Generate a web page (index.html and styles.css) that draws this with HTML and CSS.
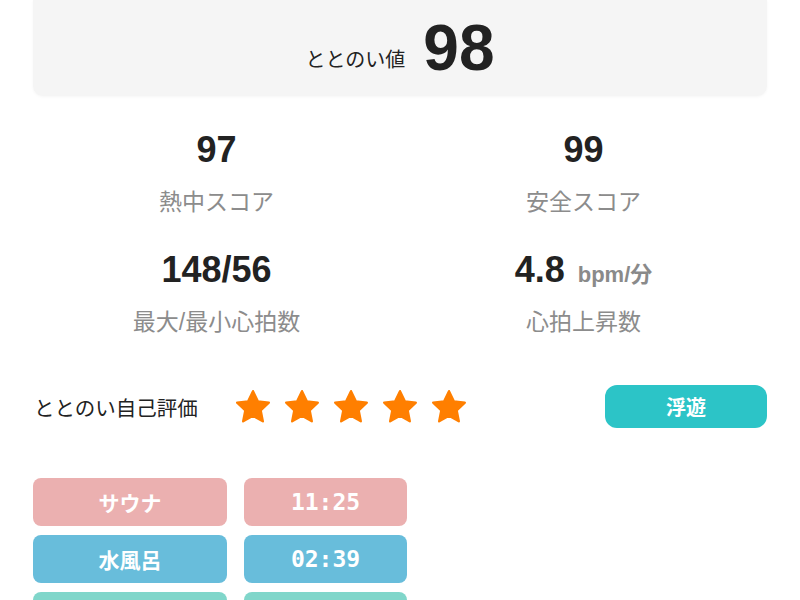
FILE: index.html
```html
<!DOCTYPE html>
<html lang="ja">
<head>
    <meta charset="UTF-8">
    <meta name="viewport" content="width=device-width, initial-scale=1.0">
    <title>ととのい記録</title>
    <link rel="stylesheet" href="styles.css">
</head>
<body>
    <div class="page">
        <div class="score-card">
            <span class="score-label">ととのい値</span>
            <span class="score-value">98</span>
        </div>

        <div class="stats">
            <div class="stat">
                <div class="stat-value">97</div>
                <div class="stat-label">熱中スコア</div>
            </div>
            <div class="stat">
                <div class="stat-value">99</div>
                <div class="stat-label">安全スコア</div>
            </div>
            <div class="stat">
                <div class="stat-value">148/56</div>
                <div class="stat-label">最大/最小心拍数</div>
            </div>
            <div class="stat">
                <div class="stat-value">4.8 <span class="unit">bpm/分</span></div>
                <div class="stat-label">心拍上昇数</div>
            </div>
        </div>

        <div class="rating">
            <span class="rating-label">ととのい自己評価</span>
            <div class="stars">
                <svg class="star" viewBox="0 0 24 24"><path d="M12 2.5l2.9 6.1 6.6.8-4.9 4.6 1.3 6.6L12 17.3l-5.9 3.3 1.3-6.6-4.9-4.6 6.6-.8z"/></svg>
                <svg class="star" viewBox="0 0 24 24"><path d="M12 2.5l2.9 6.1 6.6.8-4.9 4.6 1.3 6.6L12 17.3l-5.9 3.3 1.3-6.6-4.9-4.6 6.6-.8z"/></svg>
                <svg class="star" viewBox="0 0 24 24"><path d="M12 2.5l2.9 6.1 6.6.8-4.9 4.6 1.3 6.6L12 17.3l-5.9 3.3 1.3-6.6-4.9-4.6 6.6-.8z"/></svg>
                <svg class="star" viewBox="0 0 24 24"><path d="M12 2.5l2.9 6.1 6.6.8-4.9 4.6 1.3 6.6L12 17.3l-5.9 3.3 1.3-6.6-4.9-4.6 6.6-.8z"/></svg>
                <svg class="star" viewBox="0 0 24 24"><path d="M12 2.5l2.9 6.1 6.6.8-4.9 4.6 1.3 6.6L12 17.3l-5.9 3.3 1.3-6.6-4.9-4.6 6.6-.8z"/></svg>
            </div>
            <button class="mood">浮遊</button>
        </div>

        <div class="sessions">
            <div class="cell sauna">サウナ</div>
            <div class="cell time sauna">11:25</div>
            <div class="cell water">水風呂</div>
            <div class="cell time water">02:39</div>
            <div class="cell rest"></div>
            <div class="cell time rest"></div>
        </div>
    </div>
</body>
</html>
```

FILE: styles.css
```css
body {
    margin: 0;
    font-family: "Liberation Sans", "Noto Sans CJK JP", sans-serif;
    background: #fff;
    color: #222;
}
.page {
    padding: 0 33px;
}
.score-card {
    height: 96px;
    background: #f5f5f5;
    border-radius: 0 0 10px 10px;
    box-shadow: 0 1px 3px rgba(0, 0, 0, 0.04);
    display: flex;
    justify-content: center;
    align-items: baseline;
    gap: 18px;
    line-height: 96px;
}
.score-label {
    font-size: 20px;
    position: relative;
    top: -3px;
}
.score-value {
    font-size: 64px;
    font-weight: bold;
}
.stats {
    margin-top: 33px;
    display: grid;
    grid-template-columns: 1fr 1fr;
    row-gap: 32px;
}
.stat {
    display: flex;
    flex-direction: column;
    align-items: center;
}
.stat-value {
    height: 42px;
    font-size: 36px;
    font-weight: bold;
    line-height: 42px;
}
.unit {
    font-size: 22px;
    line-height: 1;
    color: #8a8a8a;
    margin-left: 3px;
}
.stat-label {
    margin-top: 16px;
    font-size: 23px;
    line-height: 30px;
    color: #8c8c8c;
}
.rating {
    margin-top: 48px;
    display: flex;
    align-items: center;
}
.rating-label {
    font-size: 20.5px;
    width: 199px;
    padding-left: 1px;
}
.stars {
    display: flex;
    gap: 9px;
}
.star {
    width: 40px;
    height: 40px;
    fill: #ff7f00;
    stroke: #ff7f00;
    stroke-width: 1.4;
    stroke-linejoin: round;
}
.mood {
    margin-left: auto;
    width: 162px;
    height: 43px;
    border: none;
    border-radius: 12px;
    background: #2cc4c7;
    color: #fff;
    font-family: inherit;
    font-size: 20px;
    font-weight: bold;
}
.sessions {
    margin-top: 50px;
    display: grid;
    grid-template-columns: 194px 163px;
    column-gap: 17px;
    row-gap: 9px;
}
.cell {
    height: 48px;
    border-radius: 8px;
    display: flex;
    align-items: center;
    justify-content: center;
    color: #fff;
    font-size: 21px;
    font-weight: bold;
}
.time {
    font-family: "DejaVu Sans Mono", monospace;
    font-size: 23px;
}
.sauna { background: #ebb0b0; }
.water { background: #68bddb; }
.rest { background: #80d6ca; }
```
